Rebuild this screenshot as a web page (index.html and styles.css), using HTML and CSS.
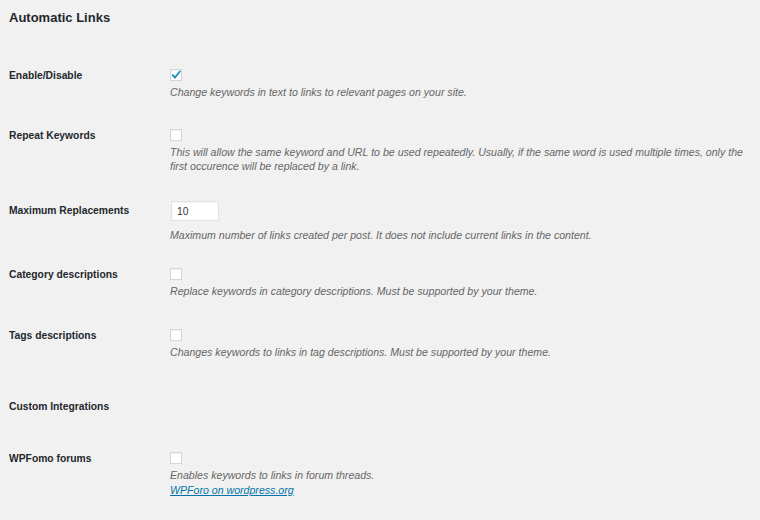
FILE: index.html
```html
<!DOCTYPE html>
<html lang="en">
  <head>
    <meta charset="UTF-8" />
    <meta name="viewport" content="width=device-width, initial-scale=1.0" />
    <title>Automatic Links</title>
    <link rel="stylesheet" href="styles.css">
  </head>
  <body>
    <div class="wrap">
      <h2 class="page-title">Automatic Links</h2>

      <div class="form-table">
        <div class="row row-first">
          <div class="row-label">Enable/Disable</div>
          <div class="row-field">
            <label class="checkbox checked">
              <svg viewBox="0 0 12 12" width="12" height="12">
                <path d="M2.8 6.1 L5 8.5 L9.8 2.5" fill="none" stroke="#1e8cbe" stroke-width="1.9" stroke-linecap="round" stroke-linejoin="round" />
              </svg>
            </label>
            <p class="description">Change keywords in text to links to relevant pages on your site.</p>
          </div>
        </div>

        <div class="row">
          <div class="row-label">Repeat Keywords</div>
          <div class="row-field">
            <label class="checkbox"></label>
            <p class="description">This will allow the same keyword and URL to be used repeatedly. Usually, if the same word is used multiple times, only the first occurence will be replaced by a link.</p>
          </div>
        </div>

        <div class="row row-input">
          <div class="row-label">Maximum Replacements</div>
          <div class="row-field">
            <input class="small-text" type="text" value="10" />
            <p class="description">Maximum number of links created per post. It does not include current links in the content.</p>
          </div>
        </div>

        <div class="row row-after-input">
          <div class="row-label">Category descriptions</div>
          <div class="row-field">
            <label class="checkbox"></label>
            <p class="description">Replace keywords in category descriptions. Must be supported by your theme.</p>
          </div>
        </div>

        <div class="row row-last">
          <div class="row-label">Tags descriptions</div>
          <div class="row-field">
            <label class="checkbox"></label>
            <p class="description">Changes keywords to links in tag descriptions. Must be supported by your theme.</p>
          </div>
        </div>
      </div>

      <h3 class="section-title">Custom Integrations</h3>

      <div class="form-table">
        <div class="row row-section">
          <div class="row-label">WPFomo forums</div>
          <div class="row-field">
            <label class="checkbox"></label>
            <p class="description">Enables keywords to links in forum threads.</p>
            <a class="plugin-link" href="#">WPForo on wordpress.org</a>
          </div>
        </div>
      </div>
    </div>
  </body>
</html>
```

FILE: styles.css
```css
body {
  margin: 0;
  background-color: #f1f1f1;
  color: #23282d;
  font-family: "Liberation Sans", Arial, Helvetica, sans-serif;
  font-size: 10.3px;
  line-height: 14px;
}

.wrap {
  padding: 9px 10px 0 9px;
}

.page-title {
  margin: 0;
  font-size: 13px;
  line-height: 18px;
  font-weight: 700;
}

.row {
  display: flex;
  margin-top: 30px;
}

.row-first {
  margin-top: 42px;
}

.row-input {
  margin-top: 28px;
}

.row-after-input {
  margin-top: 26px;
}

.row-last {
  margin-top: 31px;
}

.row-section {
  margin-top: 38px;
}

.row-label {
  flex: 0 0 161px;
  font-weight: 700;
}

.row-input .row-label {
  padding-top: 3px;
}

.row-field {
  flex: 1;
}

.checkbox {
  display: block;
  box-sizing: border-box;
  width: 12px;
  height: 12px;
  background-color: #fff;
  border: 1px solid #d6d6d6;
  box-shadow: inset 0 1px 2px rgba(0, 0, 0, 0.06);
}

.checkbox svg {
  display: block;
  margin: -1px 0 0 -1px;
}

.small-text {
  display: block;
  box-sizing: border-box;
  width: 48px;
  height: 20px;
  margin: 0 0 0 1px;
  padding: 0 5px;
  background-color: #fff;
  border: 1px solid #e2e2e2;
  box-shadow: inset 0 1px 2px rgba(0, 0, 0, 0.05);
  font-family: inherit;
  font-size: 10.3px;
  color: #32373c;
  outline: none;
}

.description {
  margin: 4px 0 0;
  color: #666;
  font-size: 10.6px;
  font-style: italic;
}

.row-input .description {
  margin-top: 7px;
}

.plugin-link {
  display: block;
  margin-top: 1px;
  width: max-content;
  color: #0073aa;
  font-size: 10.6px;
  font-style: italic;
}

.section-title {
  margin: 41px 0 0;
  font-size: 10.3px;
  line-height: 14px;
  font-weight: 700;
}
```
